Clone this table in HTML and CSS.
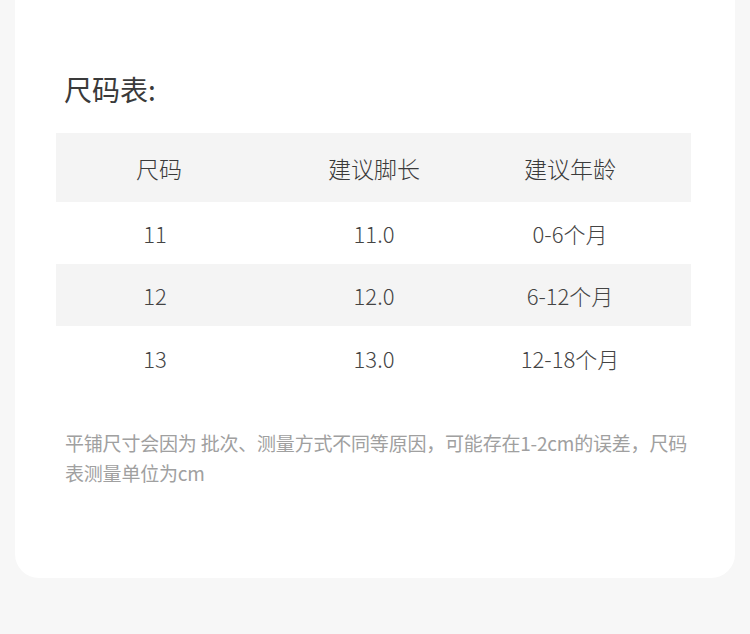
FILE: index.html
```html
<!DOCTYPE html>
<html lang="zh-CN">
<head>
<meta charset="utf-8">
<title>尺码表</title>
<link rel="stylesheet" href="styles.css">
</head>
<body>
<div class="card">
  <h2 class="title">尺码表:</h2>
  <div class="table">
    <div class="row head">
      <div class="cell">尺码</div>
      <div class="cell">建议脚长</div>
      <div class="cell">建议年龄</div>
    </div>
    <div class="row r1">
      <div class="cell">11</div>
      <div class="cell">11.0</div>
      <div class="cell">0-6个月</div>
    </div>
    <div class="row r2 shaded">
      <div class="cell">12</div>
      <div class="cell">12.0</div>
      <div class="cell">6-12个月</div>
    </div>
    <div class="row r3">
      <div class="cell">13</div>
      <div class="cell">13.0</div>
      <div class="cell">12-18个月</div>
    </div>
  </div>
  <p class="note">平铺尺寸会因为 批次、测量方式不同等原因，可能存在1-2cm的误差，尺码<br>表测量单位为cm</p>
</div>
</body>
</html>
```

FILE: styles.css
```css
html, body {
  margin: 0;
  padding: 0;
  background: #f7f7f7;
}
body {
  font-family: "Noto Sans CJK SC", "Noto Sans", sans-serif;
  color: #333;
}
.card {
  margin: 0 15px;
  background: #fff;
  border-radius: 0 0 24px 24px;
  padding: 69px 44px 90px 41px;
}
.title {
  margin: 0;
  padding-left: 8px;
  font-size: 28px;
  line-height: 40px;
  font-weight: 400;
  color: #3a3a3a;
}
.table {
  margin-top: 24px;
}
.row {
  display: grid;
  grid-template-columns: 198px 240px 152px 1fr;
  align-items: center;
  color: #444;
  font-size: 22px;
  font-weight: 300;
}
.row .cell {
  text-align: center;
  white-space: nowrap;
}
.head {
  height: 69px;
  background: #f4f4f4;
  font-size: 23px;
  color: #3a3a3a;
}
.head .cell:first-child {
  padding-left: 8px;
}
.r1, .r2 {
  height: 62px;
}
.r3 {
  height: 64px;
}
.shaded {
  background: #f4f4f4;
}
.note {
  margin: 38px 0 0;
  padding-left: 9px;
  font-size: 19px;
  line-height: 30px;
  font-weight: 400;
  letter-spacing: -0.2px;
  color: #a0a0a0;
  white-space: nowrap;
}
```
